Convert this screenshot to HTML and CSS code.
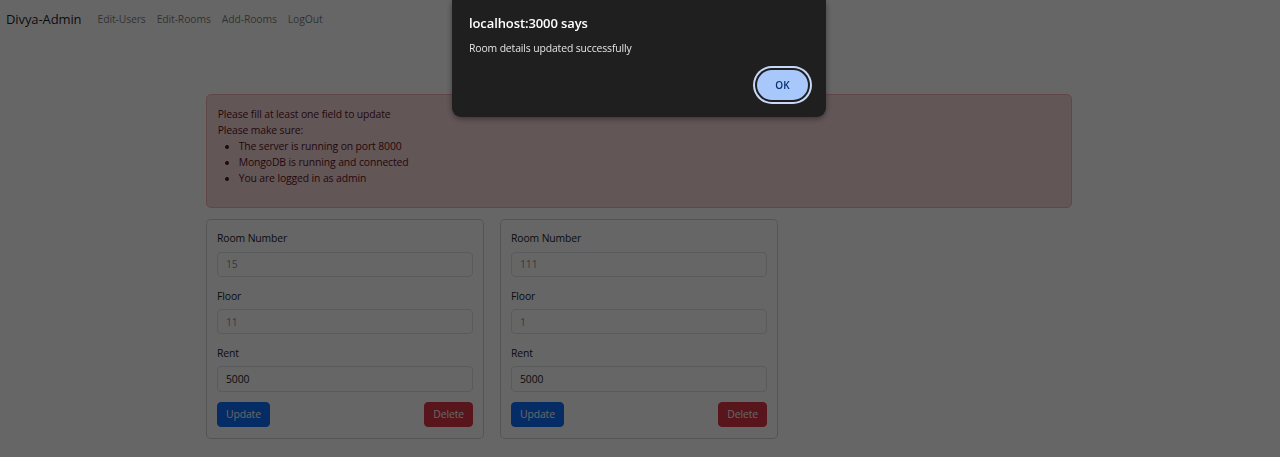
FILE: index.html
```html
<!DOCTYPE html>
<html lang="en">
<head>
<meta charset="utf-8">
<title>Divya-Admin</title>
<link rel="stylesheet" href="styles.css">
</head>
<body>
<nav class="navbar">
  <span class="brand">Divya-Admin</span>
  <a class="nav-link">Edit-Users</a>
  <a class="nav-link">Edit-Rooms</a>
  <a class="nav-link">Add-Rooms</a>
  <a class="nav-link">LogOut</a>
</nav>

<main class="container">
  <div class="alert">
    <div>Please fill at least one field to update</div>
    <div>Please make sure:</div>
    <ul>
      <li>The server is running on port 8000</li>
      <li>MongoDB is running and connected</li>
      <li>You are logged in as admin</li>
    </ul>
  </div>

  <div class="row">
    <div class="col">
      <div class="card">
        <label class="label">Room Number</label>
        <div class="input placeholder">15</div>
        <label class="label">Floor</label>
        <div class="input placeholder">11</div>
        <label class="label">Rent</label>
        <div class="input">5000</div>
        <div class="actions">
          <button class="btn btn-primary">Update</button>
          <button class="btn btn-danger">Delete</button>
        </div>
      </div>
    </div>
    <div class="col">
      <div class="card">
        <label class="label">Room Number</label>
        <div class="input placeholder">111</div>
        <label class="label">Floor</label>
        <div class="input placeholder">1</div>
        <label class="label">Rent</label>
        <div class="input">5000</div>
        <div class="actions">
          <button class="btn btn-primary">Update</button>
          <button class="btn btn-danger">Delete</button>
        </div>
      </div>
    </div>
  </div>
</main>

<div class="overlay"></div>

<div class="dialog">
  <div class="dialog-title">localhost:3000 says</div>
  <div class="dialog-msg">Room details updated successfully</div>
  <div class="dialog-actions">
    <button class="ok">OK</button>
  </div>
</div>
</body>
</html>
```

FILE: styles.css
```css
* { box-sizing: border-box; }

html, body {
  margin: 0;
  padding: 0;
  background: #ffffff;
  font-family: "Open Sans", "Noto Sans", "Liberation Sans", sans-serif;
  font-size: 10.4px;
  letter-spacing: -0.12px;
  line-height: 16px;
  color: #212529;
  height: 457px;
  overflow: hidden;
}

.navbar {
  display: flex;
  align-items: center;
  height: 37px;
  padding: 0 6px;
}

.brand {
  font-size: 13px;
  color: rgba(0,0,0,0.9);
  margin-right: 10.5px;
  letter-spacing: -0.1px;
}

.nav-link {
  color: rgba(0,0,0,0.55);
  padding: 0 5.5px;
}

.container {
  width: 866px;
  margin: 57px 0 0 206px;
}

.alert {
  background: #f8d7da;
  border: 1px solid #f1aeb5;
  color: #58151c;
  border-radius: 5px;
  padding: 10.7px 10.7px;
  margin-bottom: 10.7px;
  min-height: 114px;
}

.alert ul {
  margin: 0;
  padding-left: 21px;
}

.row {
  display: flex;
  gap: 16px;
}

.col {
  width: 278px;
}

.card {
  border: 1px solid rgba(0,0,0,0.175);
  border-radius: 5px;
  background: #fff;
  padding: 10.7px 10px 11.2px;
  display: flex;
  flex-direction: column;
}

.label {
  display: block;
  margin-bottom: 5.3px;
  color: #212529;
}

.input {
  height: 25.3px;
  border: 1px solid #dee2e6;
  border-radius: 4px;
  padding: 0 8px;
  display: flex;
  align-items: center;
  margin-bottom: 10.7px;
  color: #212529;
}

.input.placeholder {
  color: rgba(33,37,41,0.55);
}

.actions {
  display: flex;
  justify-content: space-between;
}

.btn {
  font-family: inherit;
  font-size: 10.4px;
  letter-spacing: -0.12px;
  line-height: 16px;
  height: 24.5px;
  padding: 0 8px;
  border-radius: 4px;
  border: 1px solid transparent;
  color: #fff;
}

.btn-primary { background: #0d6efd; border-color: #0d6efd; }
.btn-danger { background: #dc3545; border-color: #dc3545; }

.overlay {
  position: fixed;
  inset: 0;
  background: rgba(0,0,0,0.6);
}

.dialog {
  position: fixed;
  top: 0;
  left: 452px;
  width: 374px;
  height: 117px;
  background: #1f1f1f;
  border-radius: 0 0 9px 9px;
  box-shadow: 0 2px 6px rgba(0,0,0,0.4);
  padding: 14px 18px 0 17px;
  color: #fff;
}

.dialog-title {
  font-size: 13px;
  font-weight: 600;
  line-height: 18px;
  color: #ffffff;
  letter-spacing: -0.1px;
}

.dialog-msg {
  margin-top: 8px;
  line-height: 16px;
  color: #e3e3e3;
}

.dialog-actions {
  display: flex;
  justify-content: flex-end;
  margin-top: 14px;
}

.ok {
  width: 51px;
  height: 30px;
  border-radius: 15px;
  border: none;
  background: #a8c7fa;
  color: #062e6f;
  font-family: inherit;
  font-weight: 600;
  font-size: 10px;
  box-shadow: 0 0 0 2px #1f1f1f, 0 0 0 4px #c8d9f8;
}
```
